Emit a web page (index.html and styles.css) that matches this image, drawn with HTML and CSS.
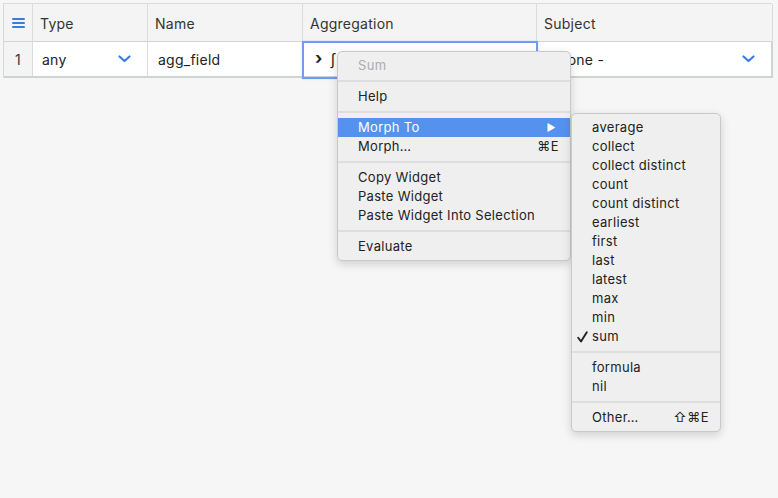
FILE: index.html
```html
<!DOCTYPE html>
<html>
<head>
<meta charset="utf-8">
<link rel="stylesheet" href="styles.css">
</head>
<body>
<div class="grid">
  <div class="hcell idx">
    <svg width="13" height="10" viewBox="0 0 13 10"><rect x="0" y="0" width="13" height="2" rx="1" fill="#3b7ddd"/><rect x="0" y="4" width="13" height="2" rx="1" fill="#3b7ddd"/><rect x="0" y="8" width="13" height="2" rx="1" fill="#3b7ddd"/></svg>
  </div>
  <div class="hcell">Type</div>
  <div class="hcell">Name</div>
  <div class="hcell">Aggregation</div>
  <div class="hcell">Subject</div>

  <div class="cell idx num">1</div>
  <div class="cell select"><span>any</span><svg class="chev" width="13" height="8" viewBox="0 0 13 8"><path d="M1.5 1.5 L6.5 6 L11.5 1.5" fill="none" stroke="#3b7ddd" stroke-width="2.2" stroke-linecap="round" stroke-linejoin="round"/></svg></div>
  <div class="cell">agg_field</div>
  <div class="cell focus"><span class="caret">›</span><span class="integral">∫</span></div>
  <div class="cell select"><span>- None -</span><svg class="chev" width="13" height="8" viewBox="0 0 13 8"><path d="M1.5 1.5 L6.5 6 L11.5 1.5" fill="none" stroke="#3b7ddd" stroke-width="2.2" stroke-linecap="round" stroke-linejoin="round"/></svg></div>
</div>

<div class="menu main-menu">
  <div class="item disabled">Sum</div>
  <div class="sep"></div>
  <div class="item">Help</div>
  <div class="sep"></div>
  <div class="item active"><span>Morph To</span><span class="arrow">▶</span></div>
  <div class="item"><span>Morph…</span><span class="key">⌘E</span></div>
  <div class="sep"></div>
  <div class="item">Copy Widget</div>
  <div class="item">Paste Widget</div>
  <div class="item">Paste Widget Into Selection</div>
  <div class="sep"></div>
  <div class="item">Evaluate</div>
</div>

<div class="menu sub-menu">
  <div class="item">average</div>
  <div class="item">collect</div>
  <div class="item">collect distinct</div>
  <div class="item">count</div>
  <div class="item">count distinct</div>
  <div class="item">earliest</div>
  <div class="item">first</div>
  <div class="item">last</div>
  <div class="item">latest</div>
  <div class="item">max</div>
  <div class="item">min</div>
  <div class="item"><svg class="check" width="11" height="12" viewBox="0 0 11 12"><path d="M1.2 6.8 L4 10.5 L9.8 1.2" fill="none" stroke="#222" stroke-width="1.9" stroke-linecap="round" stroke-linejoin="round"/></svg>sum</div>
  <div class="sep"></div>
  <div class="item">formula</div>
  <div class="item">nil</div>
  <div class="sep"></div>
  <div class="item"><span>Other…</span><span class="key">⇧⌘E</span></div>
</div>
</body>
</html>
```

FILE: styles.css
```css
html, body {
  margin: 0;
  padding: 0;
}
body {
  background: #f6f6f6;
  font-family: Inter, "Liberation Sans", sans-serif;
  color: #222;
  width: 778px;
  height: 498px;
  overflow: hidden;
  position: relative;
}
.grid {
  margin: 3px 0 0 3px;
  width: 769px;
  display: grid;
  grid-template-columns: 29px 115px 155px 234px 236px;
  grid-template-rows: 38px 36px;
  border-top: 1px solid #dcdcdc;
  border-left: 1px solid #d6d9d9;
  box-sizing: border-box;
  letter-spacing: 0.25px;
}
.hcell {
  background: #f4f4f4;
  border-right: 1px solid #dcdcdc;
  border-bottom: 1px solid #d2d5d5;
  display: flex;
  align-items: center;
  padding-left: 7px;
  padding-top: 1px;
  font-size: 14px;
  color: #333;
}
.hcell:last-child { border-right-color: #d2d5d5; }
.hcell.idx {
  padding: 0;
  justify-content: center;
}
.cell {
  background: #fff;
  border-right: 1px solid #dcdcdc;
  border-bottom: 2px solid #cfd3d3;
  display: flex;
  align-items: center;
  padding-left: 10px;
  font-size: 14px;
  color: #222;
  position: relative;
}
.cell:last-child { border-right: 2px solid #cfd3d3; }
.cell.idx {
  background: #f4f4f4;
  padding: 0;
  justify-content: center;
  color: #333;
}
.cell.select {
  justify-content: space-between;
  padding-left: 9px;
  padding-right: 16px;
}
.cell.focus {
  outline: 2px solid #6d9cf0;
  outline-offset: -1px;
  box-shadow: 0 0 2px 1px rgba(109,156,240,0.35);
  padding-left: 12px;
  gap: 8px;
  z-index: 1;
}
.caret {
  font-weight: 700;
  font-size: 17px;
  line-height: 1;
  margin-top: -2px;
}
.integral {
  font-size: 15px;
}

.menu {
  position: absolute;
  background: #efefef;
  border: 1px solid #c9c9c9;
  border-radius: 5px;
  box-shadow: 0 3px 10px rgba(0,0,0,0.16);
  padding: 4px 0;
  font-size: 13px;
  letter-spacing: 0.3px;
  color: #222;
  z-index: 5;
  box-sizing: border-box;
}
.main-menu {
  left: 337px;
  top: 51px;
  width: 234px;
}
.sub-menu {
  left: 571px;
  top: 113px;
  width: 150px;
  z-index: 6;
}
.item {
  height: 19px;
  line-height: 19px;
  padding: 0 11px 0 20px;
  display: flex;
  justify-content: space-between;
  position: relative;
  white-space: nowrap;
}
.item.disabled { color: #acacac; }
.item.active {
  background: #5592ee;
  color: #fff;
}
.arrow {
  font-size: 10px;
  margin-right: 3px;
}
.key { letter-spacing: 0.5px; }
.check {
  position: absolute;
  left: 5px;
  top: 4px;
}
.sep {
  height: 2px;
  background: #dedede;
  margin: 5px 0;
}
```
